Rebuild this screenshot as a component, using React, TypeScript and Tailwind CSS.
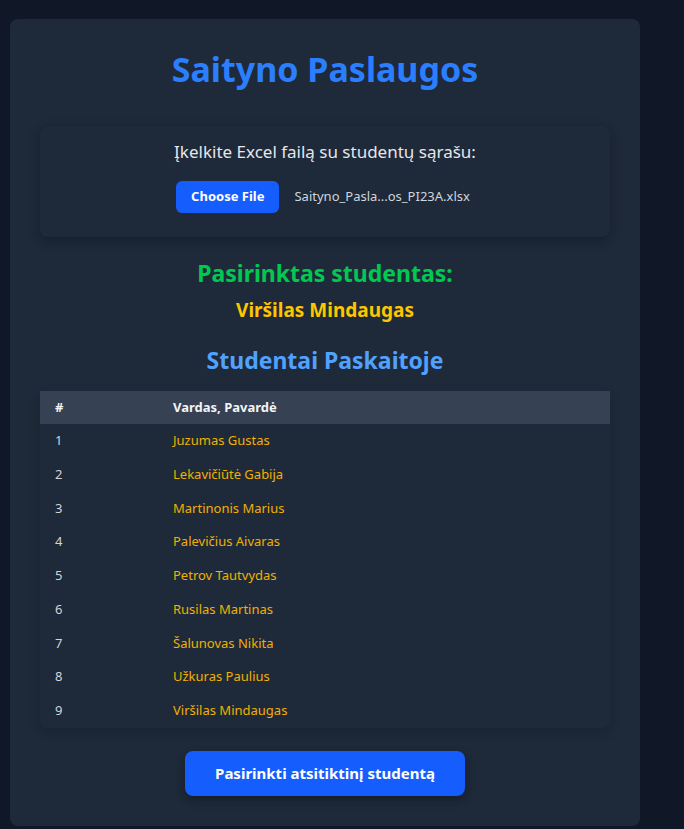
import React from "react";

const students = [
  "Juzumas Gustas",
  "Lekavičiūtė Gabija",
  "Martinonis Marius",
  "Palevičius Aivaras",
  "Petrov Tautvydas",
  "Rusilas Martinas",
  "Šalunovas Nikita",
  "Užkuras Paulius",
  "Viršilas Mindaugas",
];

export default function App() {
  return (
    <div
      className="min-h-[829px] bg-gray-900 pt-[19px] pb-[3px]"
      style={{ fontFamily: '"Noto Sans", sans-serif' }}
    >
      <div className="ml-[10px] w-[630px] rounded-lg bg-gray-800 px-[30px] pt-[30px] pb-[30px]">
        <h1 className="text-center text-[34px] font-bold leading-[40px] text-blue-500">
          Saityno Paslaugos
        </h1>
        <div className="mt-[37px] rounded-lg bg-gray-800 pt-[12px] pb-[24px] shadow-[0_4px_12px_rgba(0,0,0,0.25)]">
          <p className="text-center text-[17px] leading-[28px] text-gray-200">
            Įkelkite Excel failą su studentų sąrašu:
          </p>
          <div className="mt-[15px] flex items-center justify-center gap-[15px] pr-[4px]">
            <button className="h-[32px] rounded-md bg-blue-600 px-[15px] text-[13px] font-bold text-white">
              Choose File
            </button>
            <span className="text-[13px] text-gray-300">Saityno_Pasla...os_PI23A.xlsx</span>
          </div>
        </div>
        <h2 className="mt-[20px] text-center text-[23px] font-bold leading-[32px] text-green-500">
          Pasirinktas studentas:
        </h2>
        <p className="mt-[7px] text-center text-[19px] font-bold leading-[28px] text-yellow-400">
          Viršilas Mindaugas
        </p>
        <h2 className="mt-[20px] text-center text-[23px] font-bold leading-[32px] text-blue-400">
          Studentai Paskaitoje
        </h2>
        <div className="mt-[15px] rounded-lg shadow-[0_4px_12px_rgba(0,0,0,0.15)]">
          <table className="w-full text-left text-[13px]">
            <thead>
              <tr className="bg-gray-700">
                <th className="h-[33px] w-[133px] pl-[15px] font-bold text-gray-100">#</th>
                <th className="h-[33px] font-bold text-gray-100">Vardas, Pavardė</th>
              </tr>
            </thead>
            <tbody>
              {students.map((s, i) => (
                <tr key={s}>
                  <td className="h-[33.75px] pl-[15px] text-gray-300">{i + 1}</td>
                  <td className="h-[33.75px] text-yellow-500">{s}</td>
                </tr>
              ))}
            </tbody>
          </table>
        </div>
        <div className="mt-[23px] flex justify-center">
          <button className="h-[45px] w-[280px] rounded-lg bg-blue-600 text-[15px] font-bold text-white shadow-[0_4px_10px_rgba(0,0,0,0.3)]">
            Pasirinkti atsitiktinį studentą
          </button>
        </div>
      </div>
    </div>
  );
}
